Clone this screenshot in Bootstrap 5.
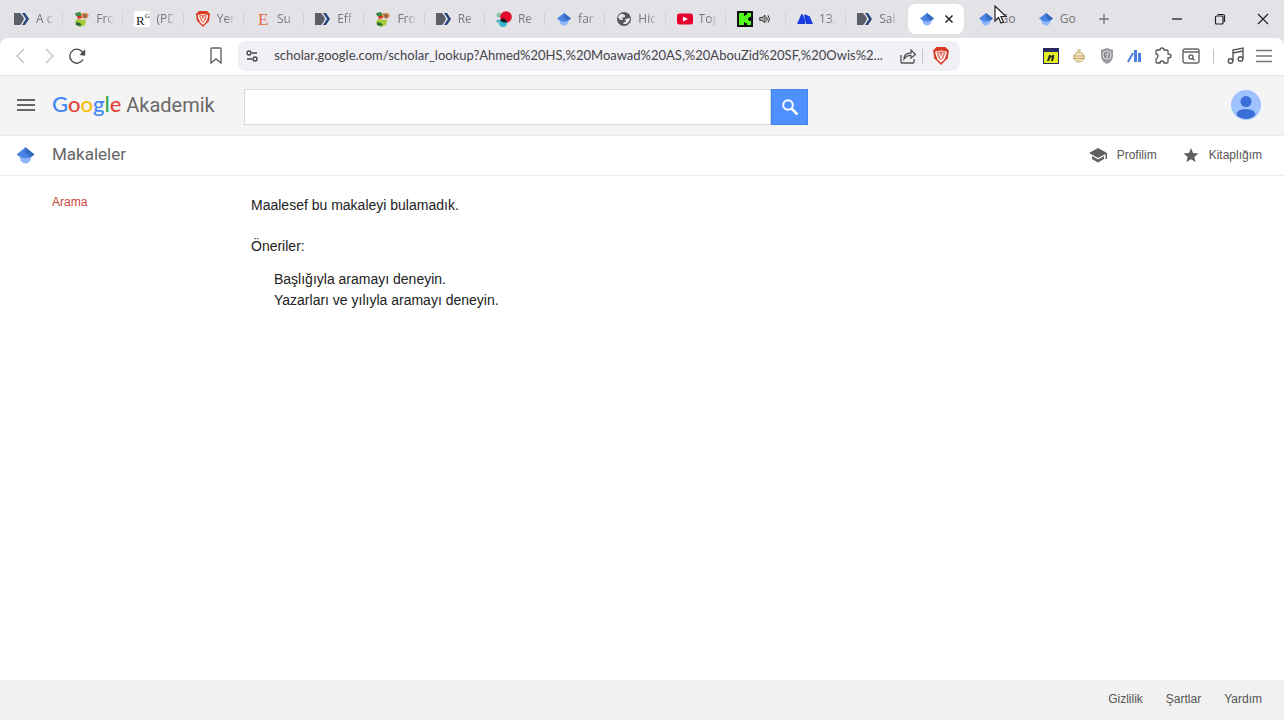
<!DOCTYPE html>
<html lang="tr">
<head>
<meta charset="utf-8">
<meta name="viewport" content="width=device-width, initial-scale=1">
<title>Google Akademik</title>
<link href="https://cdn.jsdelivr.net/npm/bootstrap@5.3.0/dist/css/bootstrap.min.css" rel="stylesheet">
<style>
  body { font-family: "Liberation Sans", sans-serif; color: #222; background: #fff; }
  svg { display: block; flex: none; }
  button { color: inherit; }
  .chrome-ui { font-family: "Open Sans", sans-serif; background: #e3e2e7; color: #444; }
  .tabstrip { height: 38px; padding-left: 2px; }
  .tabs-row { flex: 1 1 0; min-width: 0; }
  .tab-item { flex: 1 1 0; min-width: 0; height: 30px; padding: 0 6px 0 12px; gap: 6px; font-size: 12px; color: #777; background: none; }
  .tab-item + .tab-item:not(.current):not(.bare)::before { content: ""; position: absolute; left: 0; top: 8px; height: 14px; border-left: 1px solid #d3d2d7; }
  .tab-label { overflow: hidden; white-space: nowrap; flex: 1; text-align: left; -webkit-mask-image: linear-gradient(90deg, #000 50%, transparent 90%); mask-image: linear-gradient(90deg, #000 50%, transparent 90%); }
  .bare .tab-label { -webkit-mask-image: none; mask-image: none; }
  .tab-item.current { flex: 0 0 56px; margin: 0 2px; padding: 0 8px 0 12px; background: #fff; border-radius: 8px; color: #222; }
  .pointer { left: 28px; top: 1px; z-index: 2; }
  .win-controls { flex: 0 0 198px; }
  .win-btn { width: 43px; height: 30px; }
  .toolbar { height: 38px; padding-bottom: 1px; background: #fff; border-radius: 8px 8px 0 0; border-bottom: 1px solid #e4e3e6; }
  .tool-start { flex: 0 0 15.75%; padding-left: 7px; }
  .tool-mid { flex: 1 1 0; min-width: 0; gap: 8px; }
  .tool-end { flex: 0 0 25.25%; padding-right: 6px; }
  .tool-btn { width: 28px; height: 28px; }
  .address { height: 30px; background: #f1f0f5; border-radius: 8px; padding-right: 5px; min-width: 0; }
  .address input { font-family: Lato, sans-serif; font-size: 13px; color: #444449; background: none; min-width: 0; outline: 0; text-overflow: ellipsis; }
  .rule { width: 1px; height: 15px; background: #c4c4c9; }
  .site-head { height: 60px; background: #f4f4f4; border-bottom: 1px solid #e9e9e9; padding: 0 23px 2px 0; color: #666; }
  .lead-cell { width: 52px; padding-left: 16px; }
  .brand-cell { width: 192px; }
  .wordmark { font-family: Roboto, sans-serif; font-size: 20px; line-height: 28px; color: #6a6a6a; }
  .wordmark b { font-family: Lato, sans-serif; font-weight: 500; font-size: 22px; }
  .c-blue { color: #4285f4; } .c-red { color: #df4638; } .c-gold { color: #fbbc05; } .c-green { color: #34a853; }
  .search { width: 564px; }
  .search input { height: 36px; border: 1px solid #dcdcdc; min-width: 0; padding: 0 8px; font-size: 16px; outline: 0; }
  .search button { width: 37px; height: 36px; background: #4d90fe; border: 1px solid #4283ee; }
  .sub-head { height: 40px; border-bottom: 1px solid #eee; padding: 0 22px 2px 0; color: #555; }
  .section-name { font-family: Roboto, sans-serif; font-size: 17px; color: #666; font-weight: 400; }
  .sub-links { font-size: 12px; gap: 26px; }
  .sub-links a { gap: 10px; }
  .sub-links a, .page-foot a { color: #555; text-decoration: none; }
  .side { width: 251px; padding: 17px 0 0 52px; font-size: 12px; line-height: 18px; }
  .side a { color: #c8453b; text-decoration: none; }
  .message { padding-top: 19px; font-size: 14px; line-height: 21px; }
  .message p { margin-bottom: 20px; }
  .message ul { margin: -8px 0 0; padding-left: 23px; }
  .page-foot { height: 40px; background: #f1f1f1; font-size: 12px; padding: 0 22px 2px 0; gap: 23px; }
</style>
</head>
<body class="d-flex flex-column min-vh-100">
<svg width="0" height="0" class="position-absolute" aria-hidden="true">
  <symbol id="i-arrow" viewBox="0 0 16 16"><path d="M0 2h6q3 2 4 6-1 4-4 6H0z" fill="#5b5e66"/><path d="M8 2h3l4 6-4 6H8l4-6z" fill="#294679"/><path d="M7 2l4 6-4 6" fill="none" stroke="#dce4f0" stroke-width="1"/></symbol>
  <symbol id="i-front" viewBox="0 0 16 16"><path d="M1 2l5-1 2 3-2 2-4-1z" fill="#3d8a48"/><path d="M8 2l5 0 2 3-3 3-5-2z" fill="#e88a3a"/><circle cx="11" cy="5" r="2" fill="#8a6a62"/><path d="M3 5l4 0 1 2-4 1z" fill="#d92c27"/><path d="M3 8l9 1-1 5-5 2-4-2-1-3z" fill="#a6cb3a"/><path d="M2 11l4 1 2 2-3 1-3-1z" fill="#276d3c"/></symbol>
  <symbol id="i-brave" viewBox="0 0 16 16"><path d="M4 0h8l3 3-1 7-6 6-6-6-1-7z" fill="#d93b25"/><path d="M3 4l5-1 5 1v2l-2 5-3 3-3-3-2-5z" fill="#fff"/><path d="M5 4h6l1 1-2 5-2 2-2-2-2-5z" fill="#e8705c"/><path d="M6 5l2 5 2-5" fill="none" stroke="#fff"/></symbol>
  <symbol id="i-dots" viewBox="0 0 16 16"><circle cx="3" cy="4" r="2.500" fill="#8cc7a3"/><circle cx="10" cy="6" r="5.800" fill="#e4082e"/><circle cx="7" cy="12" r="4" fill="#39b4cc"/><path d="M4 9a4 4 0 0 1 7 2 6 6 0 0 1-7-2z" fill="#19181c"/><circle cx="2" cy="10" r="1.500" fill="#39a7c0"/></symbol>
  <symbol id="i-scholar" viewBox="0 0 16 16"><path d="M3 8h10v2.500a5 5 0 0 1-10 0z" fill="#8fb5fa"/><path d="M8 1l8 6.500-3.500 2.500L8 11l-4.500-1L0 7.500z" fill="#4a83e4"/><path d="M8 1l8 6.500-3.500 2.500L8 6z" fill="#356ac3"/></symbol>
  <symbol id="i-globe" viewBox="0 0 16 16"><circle cx="8" cy="8" r="7" fill="#54575c"/><path d="M2 6q2-4 5-3l2 1 0 2-3 1 1 2-3 0zM9 8l5-1q0 4-4 6H7l1-2h2z" fill="#e3e2e7"/></symbol>
  <symbol id="i-tube" viewBox="0 0 16 16"><rect x="0" y="2.500" width="16" height="11" rx="2.500" fill="#e6002d"/><path d="M6 5.500v5l5-2.500z" fill="#fff"/></symbol>
  <symbol id="i-kick" viewBox="0 0 16 16"><path d="M0 0h16v16H0z" fill="#101010"/><path d="M2 2h5v3h1V4h2V2h4v4h-2v1h-1v2h1v1h2v4h-4v-2H8v-1H7v3H2z" fill="#53fc18"/></symbol>
  <symbol id="i-sound" viewBox="0 0 16 16"><path d="M1 6h3l4-3v10l-4-3H1z" fill="#aaa" stroke="#333" stroke-width="1.200"/><path d="M10 5q2 3 0 6M12 3q4 5 0 10" fill="none" stroke="#333" stroke-width="1.300"/></symbol>
  <symbol id="i-peaks" viewBox="0 0 16 16"><path d="M0 13L4 4q1-2 2 0l2 5v4zM7 4q1-1 3 0l1 1q1-1 2 1l3 7H9z" fill="#173de0"/></symbol>
</svg>

<header class="chrome-ui">
  <div class="tabstrip d-flex align-items-center">
    <div class="tabs-row d-flex" role="tablist">
      <button class="tab-item border-0 position-relative d-flex align-items-center" role="tab"><svg width="16" height="16"><use href="#i-arrow"/></svg><span class="tab-label">A c</span></button>
      <button class="tab-item border-0 position-relative d-flex align-items-center" role="tab"><svg width="16" height="16"><use href="#i-front"/></svg><span class="tab-label">Fro</span></button>
      <button class="tab-item border-0 position-relative d-flex align-items-center" role="tab"><svg width="16" height="16" viewBox="0 0 16 16"><rect width="16" height="16" rx="1" fill="#fff"/><text x="2" y="14" font-family="Liberation Serif" font-size="13" fill="#222">R<tspan y="7" font-size="7">G</tspan></text></svg><span class="tab-label">(PD</span></button>
      <button class="tab-item border-0 position-relative d-flex align-items-center" role="tab"><svg width="16" height="16"><use href="#i-brave"/></svg><span class="tab-label">Yer</span></button>
      <button class="tab-item border-0 position-relative d-flex align-items-center" role="tab"><svg width="16" height="18" viewBox="0 0 16 18"><text x="3" y="15" font-family="Liberation Serif" font-size="17" fill="#e8694a">E</text></svg><span class="tab-label">Su</span></button>
      <button class="tab-item border-0 position-relative d-flex align-items-center" role="tab"><svg width="16" height="16"><use href="#i-arrow"/></svg><span class="tab-label">Eff</span></button>
      <button class="tab-item border-0 position-relative d-flex align-items-center" role="tab"><svg width="16" height="16"><use href="#i-front"/></svg><span class="tab-label">Fro</span></button>
      <button class="tab-item border-0 position-relative d-flex align-items-center" role="tab"><svg width="16" height="16"><use href="#i-arrow"/></svg><span class="tab-label">Re</span></button>
      <button class="tab-item border-0 position-relative d-flex align-items-center" role="tab"><svg width="16" height="16"><use href="#i-dots"/></svg><span class="tab-label">Re</span></button>
      <button class="tab-item border-0 position-relative d-flex align-items-center" role="tab"><svg width="16" height="14"><use href="#i-scholar"/></svg><span class="tab-label">far</span></button>
      <button class="tab-item border-0 position-relative d-flex align-items-center" role="tab"><svg width="16" height="16"><use href="#i-globe"/></svg><span class="tab-label">Hic</span></button>
      <button class="tab-item border-0 position-relative d-flex align-items-center" role="tab"><svg width="16" height="16"><use href="#i-tube"/></svg><span class="tab-label">Top</span></button>
      <button class="tab-item border-0 position-relative d-flex align-items-center" role="tab" aria-label="Kick"><svg width="16" height="16"><use href="#i-kick"/></svg><svg width="12" height="12"><use href="#i-sound"/></svg></button>
      <button class="tab-item border-0 position-relative d-flex align-items-center" role="tab"><svg width="16" height="16"><use href="#i-peaks"/></svg><span class="tab-label">13.</span></button>
      <button class="tab-item border-0 position-relative d-flex align-items-center" role="tab"><svg width="16" height="16"><use href="#i-arrow"/></svg><span class="tab-label">Sal</span></button>
      <button class="tab-item current border-0 position-relative d-flex align-items-center justify-content-between" role="tab" aria-selected="true" aria-label="Google Akademik"><svg width="14" height="14"><use href="#i-scholar"/></svg><svg width="14" height="14" viewBox="0 0 14 14" stroke="#222" stroke-width="1.500"><path d="M3.500 3.500l7 7M10.500 3.500l-7 7"/></svg></button>
      <button class="tab-item bare border-0 position-relative d-flex align-items-center" role="tab"><svg width="16" height="14"><use href="#i-scholar"/></svg><span class="tab-label">Go</span>
        <svg class="pointer position-absolute" width="15" height="20" viewBox="0 0 15 20"><path d="M1 1v15l3.500-3.500L7 18l2.500-1-2.500-5.500h5z" fill="#fff" stroke="#222" stroke-width="1.200"/></svg></button>
      <button class="tab-item bare border-0 position-relative d-flex align-items-center" role="tab"><svg width="16" height="14"><use href="#i-scholar"/></svg><span class="tab-label">Go</span></button>
    </div>
    <div class="win-controls d-flex align-items-center">
      <button class="btn p-0 border-0 tool-btn d-flex align-items-center justify-content-center ms-1" aria-label="Yeni sekme"><svg width="12" height="12" viewBox="0 0 12 12" stroke="#777" stroke-width="1.300"><path d="M6 1v10M1 6h10"/></svg></button>
      <div class="d-flex ms-auto">
        <button class="btn p-0 border-0 win-btn d-flex align-items-center justify-content-center" aria-label="Küçült"><svg width="12" height="12" viewBox="0 0 12 12" stroke="#222" stroke-width="1.300"><path d="M1 6h10"/></svg></button>
        <button class="btn p-0 border-0 win-btn d-flex align-items-center justify-content-center" aria-label="Geri yükle"><svg width="12" height="12" viewBox="0 0 12 12" fill="none" stroke="#222" stroke-width="1.200"><rect x="1.500" y="3" width="7.500" height="8" rx="1"/><path d="M3.500 1.500H9Q10.500 1.500 10.500 3v6"/></svg></button>
        <button class="btn p-0 border-0 win-btn d-flex align-items-center justify-content-center" aria-label="Kapat"><svg width="12" height="12" viewBox="0 0 12 12" stroke="#222" stroke-width="1.200"><path d="M1 1l10 10M11 1L1 11"/></svg></button>
      </div>
    </div>
  </div>

  <div class="toolbar d-flex align-items-center">
    <div class="tool-start d-flex">
      <button class="btn p-0 border-0 tool-btn d-flex align-items-center justify-content-center" aria-label="Geri"><svg width="16" height="16" viewBox="0 0 16 16" fill="none" stroke="#c2c2c6" stroke-width="1.400"><path d="M11 1L4 8l7 7"/></svg></button>
      <button class="btn p-0 border-0 tool-btn d-flex align-items-center justify-content-center" aria-label="İleri"><svg width="16" height="16" viewBox="0 0 16 16" fill="none" stroke="#c2c2c6" stroke-width="1.400"><path d="M5 1l7 7-7 7"/></svg></button>
      <button class="btn p-0 border-0 tool-btn d-flex align-items-center justify-content-center" aria-label="Yenile"><svg width="18" height="18" viewBox="0 0 18 18" fill="none" stroke="#4a4a4a" stroke-width="1.400"><path d="M15 12.500A7 7 0 1 1 15.500 7"/><path d="M16.500 4v4l-3.500-.5z" fill="#4a4a4a"/></svg></button>
    </div>
    <div class="tool-mid d-flex align-items-center">
      <button class="btn p-0 border-0 tool-btn d-flex align-items-center justify-content-center flex-shrink-0" aria-label="Yer işareti"><svg width="16" height="18" viewBox="0 0 16 18" fill="none" stroke="#666" stroke-width="1.400"><path d="M3 2q0-1 1-1h8q1 0 1 1v14l-5-4-5 4z"/></svg></button>
      <div class="address d-flex align-items-center flex-grow-1">
        <button class="btn p-0 border-0 tool-btn d-flex align-items-center justify-content-center flex-shrink-0" aria-label="Site bilgileri"><svg width="12" height="12" viewBox="0 0 12 12" fill="none" stroke="#444" stroke-width="1.400"><circle cx="3" cy="3" r="2"/><path d="M6 3h5M1 9h5"/><circle cx="9" cy="9" r="2"/></svg></button>
        <input class="border-0 flex-grow-1 ps-2 pe-0" type="text" aria-label="Adres" value="scholar.google.com/scholar_lookup?Ahmed%20HS,%20Moawad%20AS,%20AbouZid%20SF,%20Owis%2...">
        <button class="btn p-0 border-0 tool-btn d-flex align-items-center justify-content-center flex-shrink-0" aria-label="Paylaş"><svg width="16" height="16" viewBox="0 0 16 16" fill="none" stroke="#555" stroke-width="1.300"><path d="M1 7v7q0 1 1 1h11q1 0 1-1v-3"/><path d="M4 11q0-6 7-6V2l4.500 4.500L11 10V7.500Q7 7 4 11z"/></svg></button>
        <span class="rule flex-shrink-0"></span>
        <button class="btn p-0 border-0 tool-btn d-flex align-items-center justify-content-center flex-shrink-0 ms-1" aria-label="Brave kalkanları"><svg width="18" height="18"><use href="#i-brave"/></svg></button>
      </div>
    </div>
    <div class="tool-end d-flex align-items-center justify-content-end">
      <button class="btn p-0 border-0 tool-btn d-flex align-items-center justify-content-center" aria-label="Not"><svg width="16" height="16" viewBox="0 0 16 16"><path d="M0 0h16v16H0z" fill="#272b62"/><path d="M1 4h14v11H1z" fill="#e3ed22"/><path d="M4 13l2-6h2l-.5 1.500Q12 5 11 9l-1 4H8l1-4q-2 0-3 4z" fill="#222"/></svg></button>
      <button class="btn p-0 border-0 tool-btn d-flex align-items-center justify-content-center" aria-label="Zamanlayıcı"><svg width="14" height="14" viewBox="0 0 14 14" fill="none" stroke="#c7a86b" stroke-width="1"><circle cx="7" cy="8" r="5" fill="#f3e3c0"/><path d="M5 1h4M7 1v2M1 7h12M1 9.500h12"/></svg></button>
      <button class="btn p-0 border-0 tool-btn d-flex align-items-center justify-content-center" aria-label="Koruma"><svg width="14" height="16" viewBox="0 0 14 16"><path d="M7 0l6 2v6q0 5-6 8-6-3-6-8V2z" fill="#9b9ba3"/><circle cx="7" cy="7" r="4" fill="#85858e" stroke="#e2e2e6"/><path d="M5.500 7L8 5v3L6 9.500" fill="none" stroke="#eee"/></svg></button>
      <button class="btn p-0 border-0 tool-btn d-flex align-items-center justify-content-center" aria-label="İstatistik"><svg width="16" height="14" viewBox="0 0 16 14"><path d="M1 13L6 4" stroke="#4d7fe0" stroke-width="2"/><path d="M7 1h3v12H7zM11 4h3v9h-3z" fill="#4d7fe0"/></svg></button>
      <button class="btn p-0 border-0 tool-btn d-flex align-items-center justify-content-center" aria-label="Uzantılar"><svg width="18" height="18" viewBox="0 0 18 18" fill="none" stroke="#555" stroke-width="1.300"><path d="M2 4q0-1 1-1h3q0-2 2-2t2 2h3q1 0 1 1v3q3 0 3 2t-3 2v4q0 1-1 1h-3q0-2-2-2t-2 2H3q-1 0-1-1v-3q2-1 2-3T2 7z"/></svg></button>
      <button class="btn p-0 border-0 tool-btn d-flex align-items-center justify-content-center" aria-label="Sekme ara"><svg width="18" height="16" viewBox="0 0 18 16" fill="none" stroke="#666" stroke-width="1.400"><rect x="1" y="1" width="16" height="14" rx="2"/><path d="M1 4h16M10.500 10.500l2 2"/><circle cx="9" cy="9" r="2"/></svg></button>
      <span class="rule ms-2 me-2"></span>
      <button class="btn p-0 border-0 tool-btn d-flex align-items-center justify-content-center" aria-label="Müzik"><svg width="18" height="18" viewBox="0 0 18 18" fill="none" stroke="#555" stroke-width="1.400"><circle cx="3.500" cy="14" r="2.300"/><circle cx="13.500" cy="12" r="2.300"/><path d="M6 14V3l10-2v11M6 6l10-2"/></svg></button>
      <button class="btn p-0 border-0 tool-btn d-flex align-items-center justify-content-center" aria-label="Menü"><svg width="16" height="14" viewBox="0 0 16 14" stroke="#777" stroke-width="1.400"><path d="M0 1.500h16M0 7h16M0 12.500h16"/></svg></button>
    </div>
  </div>
</header>

<div class="site-head d-flex align-items-center">
  <div class="lead-cell"><button class="btn p-0 border-0" aria-label="Menü"><svg width="19" height="14" viewBox="0 0 19 14" stroke="#666" stroke-width="2"><path d="M1 2h18M1 7h18M1 12h18"/></svg></button></div>
  <a class="brand-cell wordmark text-decoration-none text-nowrap" href="#"><b><span class="c-blue">G</span><span class="c-red">o</span><span class="c-gold">o</span><span class="c-blue">g</span><span class="c-green">l</span><span class="c-red">e</span></b> Akademik</a>
  <form class="search d-flex mt-1">
    <input class="flex-grow-1" type="text" aria-label="Ara">
    <button class="p-0 d-flex align-items-center justify-content-center" type="button" aria-label="Ara"><svg width="18" height="18" viewBox="0 0 18 18" fill="none" stroke="#fff" stroke-width="2"><circle cx="7" cy="7" r="4.800"/><path d="M10.500 10.500l6 6" stroke-width="2.500"/></svg></button>
  </form>
  <button class="btn p-0 border-0 ms-auto" aria-label="Hesap"><svg width="30" height="30" viewBox="0 0 30 30"><circle cx="15" cy="15" r="15" fill="#a0c3ff"/><circle cx="15" cy="11.500" r="5.500" fill="#3b6fd8"/><path d="M5.500 25q0-6 9.500-6t9.500 6q-4 4-9.500 4t-9.500-4z" fill="#3b6fd8"/></svg></button>
</div>

<nav class="sub-head d-flex align-items-center">
  <div class="lead-cell"><svg width="19" height="18"><use href="#i-scholar"/></svg></div>
  <h1 class="section-name m-0">Makaleler</h1>
  <div class="sub-links d-flex ms-auto">
    <a class="d-flex align-items-center" href="#"><svg width="18" height="16" viewBox="0 0 18 16" fill="#5f5f5f"><path d="M9 1l9 5v6h-1.500V7L9 11 0 6z"/><path d="M3 9l6 3.500L15 9v3l-6 3.500L3 12z"/></svg>Profilim</a>
    <a class="d-flex align-items-center" href="#"><svg width="16" height="16" viewBox="0 0 16 16" fill="#5f5f5f"><path d="M8 1l2 5 5.500.4-4.200 3.600L12.600 15 8 12.300 3.400 15l1.300-5L.5 6.400 6 6z"/></svg>Kitaplığım</a>
  </div>
</nav>

<main class="d-flex flex-grow-1">
  <aside class="side"><a href="#">Arama</a></aside>
  <section class="message">
    <p>Maalesef bu makaleyi bulamadık.</p>
    <p>Öneriler:</p>
    <ul class="list-unstyled"><li>Başlığıyla aramayı deneyin.</li><li>Yazarları ve yılıyla aramayı deneyin.</li></ul>
  </section>
</main>

<footer class="page-foot d-flex align-items-center justify-content-end">
  <a href="#">Gizlilik</a><a href="#">Şartlar</a><a href="#">Yardım</a>
</footer>
<script src="https://cdn.jsdelivr.net/npm/bootstrap@5.3.0/dist/js/bootstrap.bundle.min.js"></script>
</body>
</html>
